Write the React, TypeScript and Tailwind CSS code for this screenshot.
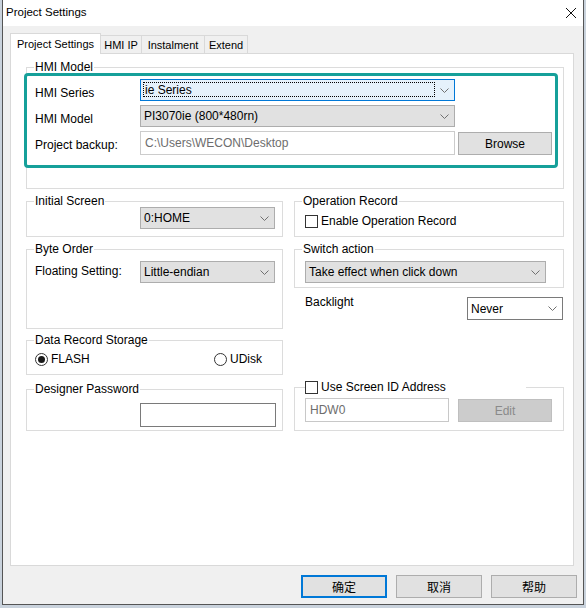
import React from "react"

type Tone = "gray" | "focus" | "white"

function Chevron() {
  return (
    <svg width="9" height="5" viewBox="0 0 9 5">
      <path d="M0.5 0.5 L4.5 4.5 L8.5 0.5" fill="none" stroke="#707070" strokeWidth="1" />
    </svg>
  )
}

function Combo({ value, className = "", tone = "gray" }: { value: string; className?: string; tone?: Tone }) {
  const skin =
    tone === "focus"
      ? "bg-[#e5f1fb] border-[#0078d7]"
      : tone === "white"
      ? "bg-white border-[#7a7a7a]"
      : "bg-[#e1e1e1] border-[#adadad]"
  return (
    <div className={`flex border ${skin} ${className}`}>
      {tone === "focus" ? (
        <div className="flex-1 ml-[2px] my-[2px] mb-[3px] border border-dotted border-black flex items-center pl-[1px]">
          {value}
        </div>
      ) : (
        <div className="flex-1 flex items-center pl-[3px]">{value}</div>
      )}
      <div className="w-[19px] flex items-center justify-center">
        <Chevron />
      </div>
    </div>
  )
}

function Group({
  title,
  className = "",
  legendClass = "ml-[7px] px-[1px]",
  children,
}: {
  title: React.ReactNode
  className?: string
  legendClass?: string
  children?: React.ReactNode
}) {
  return (
    <fieldset className={`border border-[#dcdcdc] ${className}`}>
      <legend className={`leading-[14px] ${legendClass}`}>{title}</legend>
      {children}
    </fieldset>
  )
}

function Button({ label, className = "" }: { label: string; className?: string }) {
  return (
    <div className={`flex items-center justify-center border border-[#adadad] bg-[#e1e1e1] ${className}`}>
      {label}
    </div>
  )
}

function Check() {
  return <div className="w-[13px] h-[13px] border border-[#333333] bg-white" />
}

function Radio({ on }: { on?: boolean }) {
  return (
    <div className="w-[13px] h-[13px] rounded-full border border-[#333333] bg-white flex items-center justify-center">
      {on && <div className="w-[7px] h-[7px] rounded-full bg-[#1a1a1a]" />}
    </div>
  )
}

export default function App() {
  return (
    <div className="w-[586px] h-[608px] bg-[#c9d2dc] font-['Liberation_Sans',Arial,sans-serif] text-[12px] text-black">
      <div className="ml-[2px] w-[582px] h-[605px] flex flex-col border-x border-b border-[#555555] bg-[#f0f0f0]">
        {/* title bar */}
        <div className="h-[26px] bg-white flex items-center justify-between pl-[3px] pr-[7px]">
          <span className="text-[11.5px]">Project Settings</span>
          <svg width="10" height="10" viewBox="0 0 10 10">
            <path d="M0 0 L10 10 M10 0 L0 10" stroke="#111" strokeWidth="1" />
          </svg>
        </div>

        <div className="pt-[7px] pl-[7px]">
          {/* tabs */}
          <div className="flex items-end h-[20px] text-[11px]">
            <div className="relative z-10 w-[91px] h-[21px] -mb-px flex items-center justify-center bg-white border-x border-t border-[#d9d9d9]">
              Project Settings
            </div>
            <div className="w-[41px] h-[19px] -mb-px flex items-center justify-center border-t border-r border-[#d9d9d9]">HMI IP</div>
            <div className="w-[63px] h-[19px] -mb-px flex items-center justify-center border-t border-r border-[#d9d9d9]">Instalment</div>
            <div className="w-[43px] h-[19px] -mb-px flex items-center justify-center border-t border-r border-[#d9d9d9]">Extend</div>
          </div>

          {/* panel */}
          <div className="w-[564px] h-[513px] border border-[#d9d9d9] bg-white pt-[6px] pl-[15px]">
            <Group title="HMI Model" className="w-[538px] h-[129px]">
              <div className="-ml-[3px] -mt-[1px] w-[534px] h-[95px] border-[3px] border-[#16a09a] rounded-[4px] pl-[8px] pt-[3px] flex flex-col gap-[4px]">
                <div className="flex h-[22px]">
                  <span className="w-[105px] pt-[7px] leading-[14px]">HMI Series</span>
                  <Combo value="ie Series" tone="focus" className="w-[315px] h-[22px]" />
                </div>
                <div className="flex h-[22px]">
                  <span className="w-[105px] pt-[7px] leading-[14px]">HMI Model</span>
                  <Combo value="PI3070ie (800*480rn)" className="w-[315px] h-[22px]" />
                </div>
                <div className="flex h-[24px]">
                  <span className="w-[105px] pt-[7px] leading-[14px]">Project backup:</span>
                  <div className="w-[315px] h-[24px] border border-[#cccccc] flex items-center pl-[4px] text-[#6d6d6d]">
                    C:\Users\WECON\Desktop
                  </div>
                  <Button label="Browse" className="ml-[3px] mt-[1px] w-[94px] h-[23px]" />
                </div>
              </div>
            </Group>

            <div className="mt-[5px] flex gap-[11px]">
              {/* left column */}
              <div className="w-[257px] flex flex-col">
                <Group title="Initial Screen" className="h-[43px]">
                  <Combo value="0:HOME" className="ml-[113px] -mt-[1px] w-[135px] h-[22px]" />
                </Group>
                <Group title="Byte Order" className="mt-[5px] h-[87px]">
                  <div className="flex mt-[5px] pl-[8px]">
                    <span className="w-[105px] pt-[3px] leading-[14px]">Floating Setting:</span>
                    <Combo value="Little-endian" className="w-[135px] h-[22px]" />
                  </div>
                </Group>
                <Group title="Data Record Storage" className="mt-[4px] h-[42px]">
                  <div className="flex mt-[5px] pl-[8px] leading-[14px]">
                    <div className="w-[179px] flex items-center gap-[3px]">
                      <Radio on />
                      <span>FLASH</span>
                    </div>
                    <div className="flex items-center gap-[3px]">
                      <Radio />
                      <span>UDisk</span>
                    </div>
                  </div>
                </Group>
                <Group title="Designer Password" className="mt-[7px] h-[49px]">
                  <div className="ml-[113px] mt-[7px] w-[136px] h-[24px] border border-[#7a7a7a] bg-white" />
                </Group>
              </div>

              {/* right column */}
              <div className="w-[270px] flex flex-col">
                <Group title="Operation Record" className="h-[43px]">
                  <div className="flex items-center gap-[3px] mt-[6px] pl-[10px] leading-[14px]">
                    <Check />
                    <span>Enable Operation Record</span>
                  </div>
                </Group>
                <Group title="Switch action" className="mt-[5px] h-[46px]">
                  <Combo value="Take effect when click down" className="ml-[10px] mt-[5px] w-[241px] h-[22px]" />
                </Group>
                <div className="mt-[7px] flex pl-[11px]">
                  <span className="leading-[14px]">Backlight</span>
                  <Combo value="Never" tone="white" className="ml-auto mr-px mt-[2px] w-[96px] h-[23px]" />
                </div>
                <Group
                  title={
                    <span className="flex items-center gap-[3px]">
                      <Check />
                      <span>Use Screen ID Address</span>
                    </span>
                  }
                  legendClass="ml-[10px] w-[221px]"
                  className="mt-[60px] h-[51px]"
                >
                  <div className="flex mt-[4px] pl-[10px]">
                    <div className="w-[144px] h-[24px] border border-[#c8c8c8] bg-white flex items-center pl-[4px] text-[#6d6d6d]">
                      HDW0
                    </div>
                    <div className="ml-[9px] mt-[1px] w-[94px] h-[23px] border border-[#bfbfbf] bg-[#cccccc] text-[#8a8a8a] flex items-center justify-center">
                      Edit
                    </div>
                  </div>
                </Group>
              </div>
            </div>
          </div>
        </div>

        {/* dialog buttons */}
        <div className="mt-[9px] pr-[6px] flex justify-end gap-[9px] font-['Noto_Sans_CJK_SC',sans-serif] text-[12px]">
          <div className="w-[86px] h-[23px] border-2 border-[#0078d7] bg-[#e1e1e1] flex items-center justify-center">确定</div>
          <Button label="取消" className="w-[86px] h-[23px]" />
          <Button label="帮助" className="w-[86px] h-[23px]" />
        </div>
      </div>
    </div>
  )
}
